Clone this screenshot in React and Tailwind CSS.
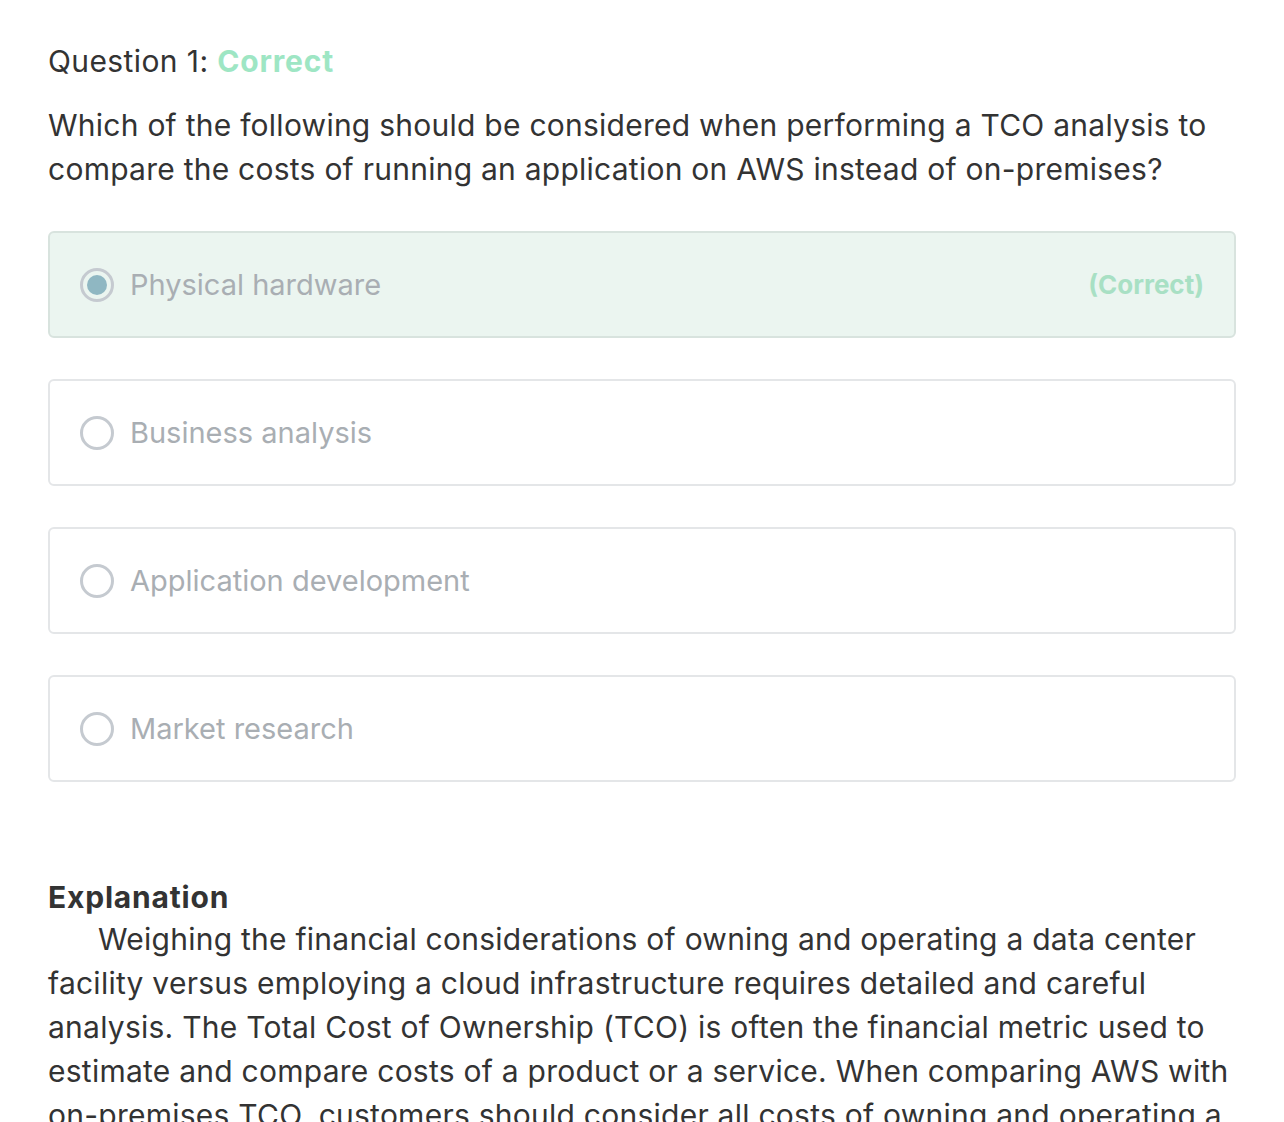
const options = [
  { label: 'Physical hardware', selected: true, correct: true },
  { label: 'Business analysis' },
  { label: 'Application development' },
  { label: 'Market research' },
]

const Radio = ({ checked }) => (
  <span className="w-[34px] h-[34px] rounded-full border-[3px] border-[#c5cad0] flex items-center justify-center shrink-0">
    {checked && <span className="w-[20px] h-[20px] rounded-full bg-[#8fb7c2]" />}
  </span>
)

const App = () => {
  return (
    <div className="bg-white min-h-[1122px] px-[48px] pt-[39px] text-[#333333] font-['Inter','Helvetica_Neue',sans-serif]">
      <h2 className="text-[30px] leading-[44px] tracking-[0.4px]">
        Question 1: <span className="text-[#9ee6c4] font-bold tracking-[0.8px]">Correct</span>
      </h2>
      <p className="mt-[20px] text-[30px] leading-[44px] tracking-[0.25px]">
        Which of the following should be considered when performing a TCO analysis to compare the costs of running an application on AWS instead of on-premises?
      </p>

      <ul className="mt-[40px] flex flex-col gap-[41px]">
        {options.map((o) => (
          <li
            key={o.label}
            className={
              o.selected
                ? 'h-[107px] rounded-[6px] border-2 border-[#d8e3de] bg-[#ebf5f0] flex items-center px-[30px]'
                : 'h-[107px] rounded-[6px] border-2 border-[#e4e6e8] bg-white flex items-center px-[30px]'
            }
          >
            <Radio checked={o.selected} />
            <span className="ml-[16px] text-[29px] text-[#a9aeb3]">{o.label}</span>
            {o.correct && (
              <span className="ml-auto text-[26px] font-bold text-[#a8e0c4]">(Correct)</span>
            )}
          </li>
        ))}
      </ul>

      <div className="mt-[97px]">
        <h3 className="text-[30px] leading-[36px] font-bold tracking-[0.8px]">Explanation</h3>
        <p className="mt-[2px] text-[30px] leading-[44px] tracking-[0.25px] indent-[50px]">
          Weighing the financial considerations of owning and operating a data center facility versus employing a cloud infrastructure requires detailed and careful analysis. The Total Cost of Ownership (TCO) is often the financial metric used to estimate and compare costs of a product or a service. When comparing AWS with on-premises TCO, customers should consider all costs of owning and operating a data center.
        </p>
      </div>
    </div>
  )
}

export default App
